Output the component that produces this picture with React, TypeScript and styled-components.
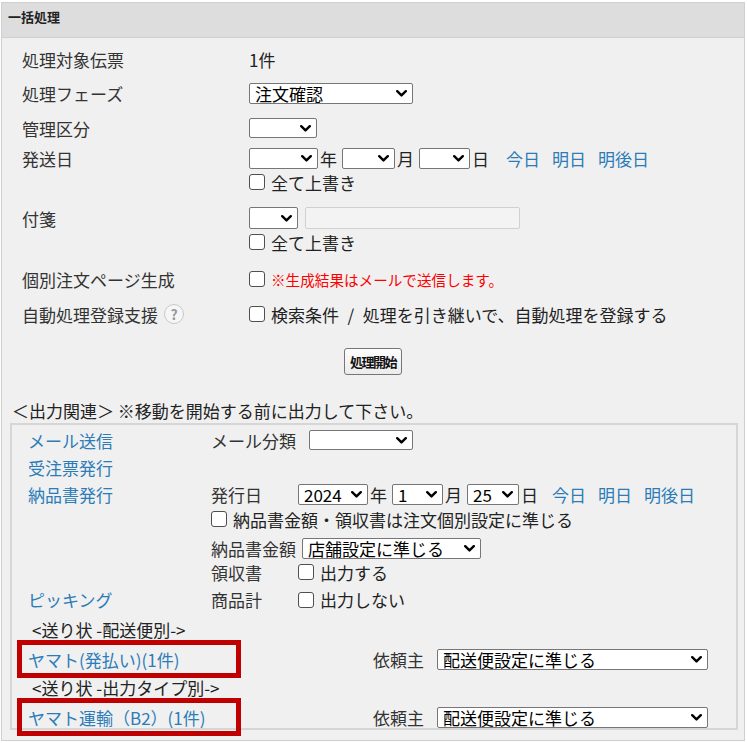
import React from 'react'
import styled, { createGlobalStyle } from 'styled-components'

const GlobalStyle = createGlobalStyle`
  html, body {
    margin: 0;
    padding: 0;
    background: #fff;
  }
  body {
    font-family: "Noto Sans CJK JP", "Noto Sans", sans-serif;
    font-size: 17px;
    color: #222;
  }
`

const Page = styled.div`
  padding: 2px 2px 0 1px;
`

const Panel = styled.section`
  border: 1px solid #cfcfcf;
  background: #f0f0f0;
  padding-bottom: 10px;
`

const Header = styled.div`
  height: 34px;
  line-height: 28px;
  padding-left: 6px;
  background: #dddddd;
  border-bottom: 1px solid #cfcfcf;
  font-size: 13px;
  font-weight: bold;
  color: #222;
`

const Body = styled.div`
  padding: 5px 0 0 20px;
`

const Row = styled.div<{ $mt?: number }>`
  display: grid;
  grid-template-columns: 227px 1fr;
  align-items: start;
  margin-top: ${p => p.$mt ?? 0}px;
`

const Line = styled.div<{ $h: number; $mt?: number }>`
  display: flex;
  align-items: center;
  height: ${p => p.$h}px;
  margin-top: ${p => p.$mt ?? 0}px;
  white-space: nowrap;
`

const Label = styled(Line)`
  color: #333;
`

const Field = styled.div`
  display: flex;
  flex-direction: column;
`

const Unit = styled.span`
  margin: 0 5px 0 2px;
`

const DayLink = styled.a<{ $ml?: number }>`
  color: #2c7cb8;
  text-decoration: none;
  cursor: pointer;
  margin-left: ${p => p.$ml ?? 12}px;
`

const SelectBox = styled.div<{ $w: number; $h?: number }>`
  box-sizing: border-box;
  width: ${p => p.$w}px;
  height: ${p => p.$h ?? 21}px;
  display: flex;
  align-items: center;
  justify-content: space-between;
  padding: 0 5px;
  background: #fff;
  border: 1px solid #767676;
  border-radius: 2px;
  color: #000;
  font-size: 17px;
  line-height: 1;
`

const Chevron = () => (
  <svg width="11" height="7" viewBox="0 0 11 7">
    <path d="M1.2 1.2 L5.5 5.4 L9.8 1.2" fill="none" stroke="#000" strokeWidth="2.4" strokeLinecap="round" strokeLinejoin="round" />
  </svg>
)

function Select({ w, h, value }: { w: number; h?: number; value?: string }) {
  return (
    <SelectBox $w={w} $h={h}>
      <span>{value}</span>
      <Chevron />
    </SelectBox>
  )
}

const Check = styled.span<{ $ml?: number }>`
  box-sizing: border-box;
  display: inline-block;
  width: 16px;
  height: 16px;
  margin: 0 6px 0 ${p => p.$ml ?? 0}px;
  background: #fff;
  border: 1px solid #4f4f4f;
  border-radius: 3px;
  flex: none;
`

const TextInput = styled.div`
  box-sizing: border-box;
  width: 215px;
  height: 22px;
  margin-left: 7px;
  background: #f3f3f3;
  border: 1px solid #d0d0d0;
  border-radius: 2px;
`

const Notice = styled.span`
  color: #ff0000;
  font-size: 14.6px;
`

const Help = styled.span`
  box-sizing: border-box;
  display: inline-flex;
  align-items: center;
  justify-content: center;
  width: 20px;
  height: 20px;
  margin-left: 6px;
  border-radius: 50%;
  background: #f6f6f6;
  border: 1px solid #c8c8c8;
  color: #999;
  font-size: 14px;
  font-weight: bold;
`

const Actions = styled.div`
  display: flex;
  justify-content: center;
  margin-top: 17px;
`

const StartButton = styled.button`
  box-sizing: border-box;
  width: 58px;
  height: 27px;
  padding: 0;
  background: linear-gradient(#fdfdfd, #ececec);
  border: 1px solid #767676;
  border-radius: 3px;
  font-family: "Noto Sans CJK JP", sans-serif;
  font-size: 13px;
  font-weight: bold;
  letter-spacing: -1.5px;
  color: #111;
`

const OutputTitle = styled.div`
  height: 26px;
  display: flex;
  align-items: center;
  margin: 22px 0 0 10px;
  white-space: pre;
`

const OutputBox = styled.div`
  margin: 0 6px 0 8px;
  border: 2px solid #d6d6d6;
  padding-left: 5px;
`

const OutRow = styled.div`
  display: grid;
  grid-template-columns: 194px 1fr;
  align-items: start;
`

const ActionLink = styled.a`
  color: #2c7cb8;
  text-decoration: none;
  cursor: pointer;
`

const LinkCell = styled(Line)`
  padding-left: 11px;
`

const SubLabel = styled.span<{ $w: number }>`
  display: inline-block;
  width: ${p => p.$w}px;
  color: #333;
`

const GroupTitle = styled.div<{ $h: number }>`
  height: ${p => p.$h}px;
  display: flex;
  align-items: flex-end;
  padding-left: 15px;
  line-height: 20px;
`

const CarrierRow = styled.div<{ $mb?: number }>`
  display: flex;
  align-items: center;
  height: 38px;
  margin-bottom: ${p => p.$mb ?? 0}px;
`

const Highlight = styled.div`
  box-sizing: border-box;
  width: 224px;
  height: 38px;
  display: flex;
  align-items: center;
  padding-left: 6px;
  border: 5px solid #c00000;
`

const Requester = styled.div`
  display: flex;
  align-items: center;
  margin-left: 132px;
  gap: 13px;
  color: #333;
`

export default function App() {
  return (
    <Page>
      <GlobalStyle />
      <Panel>
        <Header>一括処理</Header>
        <Body>
          <Row>
            <Label $h={33}>処理対象伝票</Label>
            <Line $h={33}>1件</Line>
          </Row>
          <Row>
            <Label $h={35}>処理フェーズ</Label>
            <Line $h={35}><Select w={164} value="注文確認" /></Line>
          </Row>
          <Row>
            <Label $h={34}>管理区分</Label>
            <Line $h={34}><Select w={68} h={20} /></Line>
          </Row>
          <Row>
            <Label $h={26}>発送日</Label>
            <Field>
              <Line $h={26}>
                <Select w={69} />
                <Unit>年</Unit>
                <Select w={53} />
                <Unit>月</Unit>
                <Select w={51} />
                <Unit>日</Unit>
                <DayLink $ml={12}>今日</DayLink>
                <DayLink>明日</DayLink>
                <DayLink>明後日</DayLink>
              </Line>
              <Line $h={22}><Check />全て上書き</Line>
            </Field>
          </Row>
          <Row $mt={12}>
            <Label $h={26}>付箋</Label>
            <Field>
              <Line $h={26}>
                <Select w={49} h={22} />
                <TextInput />
              </Line>
              <Line $h={22}><Check />全て上書き</Line>
            </Field>
          </Row>
          <Row $mt={8}>
            <Label $h={36}>個別注文ページ生成</Label>
            <Line $h={36}><Check /><Notice>※生成結果はメールで送信します。</Notice></Line>
          </Row>
          <Row>
            <Label $h={34}>自動処理登録支援<Help>?</Help></Label>
            <Line $h={34}><Check />検索条件{'\u2002/\u2002'}処理を引き継いで、自動処理を登録する</Line>
          </Row>
        </Body>
        <Actions>
          <StartButton>処理開始</StartButton>
        </Actions>
        <OutputTitle>＜出力関連＞ ※移動を開始する前に出力して下さい。</OutputTitle>
        <OutputBox>
          <OutRow>
            <LinkCell $h={30}><ActionLink>メール送信</ActionLink></LinkCell>
            <Line $h={30}>
              <SubLabel $w={98}>メール分類</SubLabel>
              <Select w={104} h={20} />
            </Line>
          </OutRow>
          <OutRow>
            <LinkCell $h={25}><ActionLink>受注票発行</ActionLink></LinkCell>
            <Line $h={25} />
          </OutRow>
          <OutRow>
            <LinkCell $h={28}><ActionLink>納品書発行</ActionLink></LinkCell>
            <Field>
              <Line $h={28}>
                <SubLabel $w={87}>発行日</SubLabel>
                <Select w={70} value="2024" />
                <Unit>年</Unit>
                <Select w={51} value="1" />
                <Unit>月</Unit>
                <Select w={52} value="25" />
                <Unit>日</Unit>
                <DayLink $ml={9}>今日</DayLink>
                <DayLink>明日</DayLink>
                <DayLink>明後日</DayLink>
              </Line>
              <Line $h={22}><Check />納品書金額・領収書は注文個別設定に準じる</Line>
              <Line $h={24} $mt={6}>
                <SubLabel $w={91}>納品書金額</SubLabel>
                <Select w={179} value="店舗設定に準じる" />
              </Line>
              <Line $h={24}>
                <SubLabel $w={87}>領収書</SubLabel>
                <Check />出力する
              </Line>
            </Field>
          </OutRow>
          <OutRow>
            <LinkCell $h={31}><ActionLink>ピッキング</ActionLink></LinkCell>
            <Line $h={31}>
              <SubLabel $w={87}>商品計</SubLabel>
              <Check />出力しない
            </Line>
          </OutRow>
          <GroupTitle $h={25}>&lt;送り状 -配送便別-&gt;</GroupTitle>
          <CarrierRow>
            <Highlight><ActionLink>ヤマト(発払い)(1件)</ActionLink></Highlight>
            <Requester>依頼主<Select w={271} value="配送便設定に準じる" /></Requester>
          </CarrierRow>
          <GroupTitle $h={20}>&lt;送り状 -出力タイプ別-&gt;</GroupTitle>
          <CarrierRow $mb={-8}>
            <Highlight><ActionLink>ヤマト運輸（B2）(1件)</ActionLink></Highlight>
            <Requester>依頼主<Select w={271} value="配送便設定に準じる" /></Requester>
          </CarrierRow>
        </OutputBox>
      </Panel>
    </Page>
  )
}
